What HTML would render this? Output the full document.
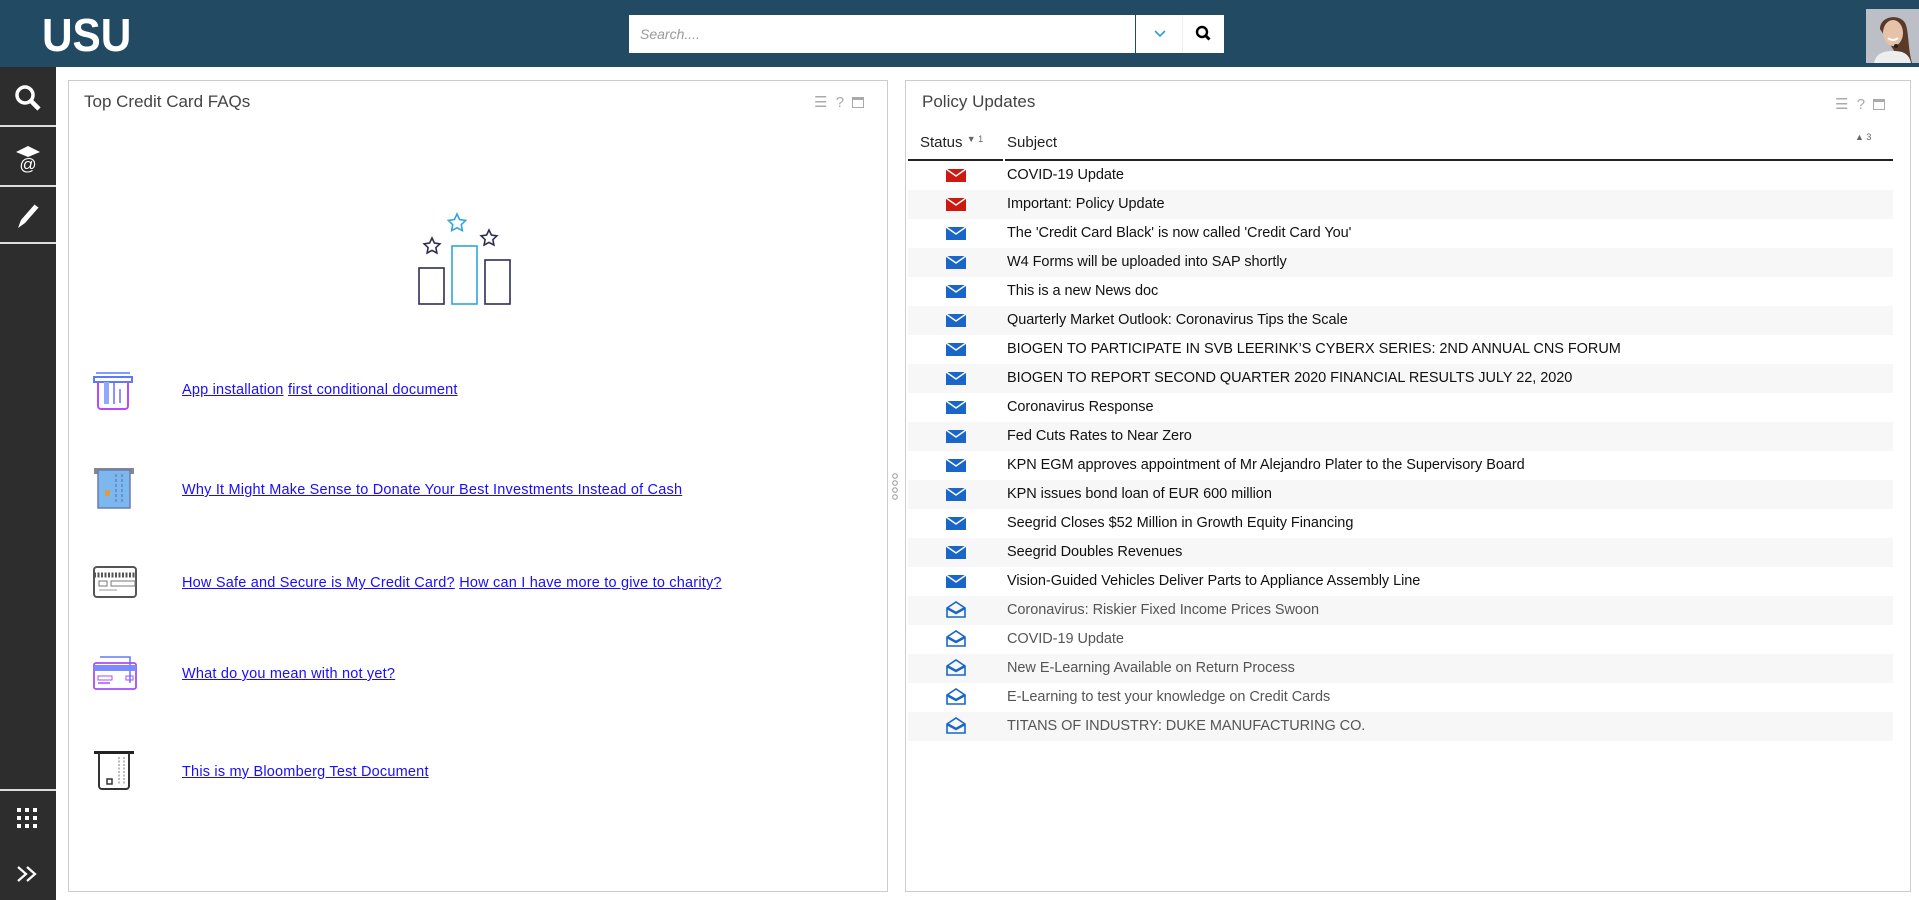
<!DOCTYPE html>
<html><head><meta charset="utf-8"><style>
*{box-sizing:border-box;margin:0;padding:0}
body{width:1919px;height:900px;overflow:hidden;background:#fff;font-family:"Liberation Sans",sans-serif;position:relative}
.hdr{position:absolute;left:0;top:0;width:1919px;height:67px;background:#234a63}
.logo{position:absolute;left:42px;top:8px;color:#fff;font-weight:bold;font-size:46px;letter-spacing:0px;transform:scaleX(0.92);transform-origin:left}
.search{position:absolute;left:629px;top:15px;width:507px;height:38px;background:#fff;border-right:1px solid #234a63}
.search span{position:absolute;left:11px;top:11px;font-size:14px;font-style:italic;color:#999}
.dd{position:absolute;left:1136px;top:15px;width:47px;height:38px;background:#fff;border-right:1px solid #eee}
.sb{position:absolute;left:1183px;top:15px;width:41px;height:38px;background:#fff}
.av{position:absolute;left:1866px;top:9px;width:53px;height:54px}
.side{position:absolute;left:0;top:67px;width:56px;height:833px;background:#2d2d2d}
.ln{position:absolute;left:0;width:56px;height:2px;background:#ddd}
.panel{position:absolute;border:1px solid #ccc;background:#fff}
.ttl{position:absolute;font-size:17px;color:#444}
.tools{position:absolute;font-size:15px;color:#aaa}
a{color:#1a0dff;text-decoration:underline;font-size:14.5px;letter-spacing:.2px}
.lk{position:absolute;left:182px}
.row{position:absolute;left:908px;width:985px;height:29px;font-size:14.5px;letter-spacing:-.05px;color:#111;line-height:29px}
.row.s{background:#f7f7f7}
.row .t{position:absolute;left:99px;top:0}
.row.r .t{color:#555}
.row svg{position:absolute;left:38px;top:8px}
</style></head><body>
<div class="hdr">
<div class="logo">USU</div>
<div class="search"><span>Search....</span></div>
<div class="dd"><svg width="47" height="38"><path d="M19 16l5 5 5-5" stroke="#2a9fd8" stroke-width="1.6" fill="none"/></svg></div>
<div class="sb"><svg width="41" height="38"><circle cx="19" cy="17" r="5" stroke="#000" stroke-width="2.4" fill="none"/><path d="M22.5 20.5l4 4" stroke="#000" stroke-width="3"/></svg></div>
<svg class="av" width="53" height="54"><rect width="53" height="54" fill="#bcbfc6"/><path d="M14 20c0-14 22-16 26-4 3 10 2 24 6 38H36z" fill="#5a3a28"/><ellipse cx="27" cy="24" rx="10" ry="13" fill="#e6c2a8"/><path d="M8 54c2-10 10-12 19-12s16 2 18 12z" fill="#eee"/><path d="M22 29q5 4 10 0" stroke="#fff" stroke-width="2" fill="none"/><circle cx="30" cy="37" r="2" fill="#222"/></svg>
</div>
<div class="side">
<svg style="position:absolute;left:13px;top:16px" width="30" height="30"><circle cx="12" cy="12" r="8" stroke="#fff" stroke-width="3.5" fill="none"/><path d="M18 18l8 8" stroke="#fff" stroke-width="4.5"/></svg>
<div class="ln" style="top:58px"></div>
<svg style="position:absolute;left:14px;top:77px" width="28" height="30"><path d="M2 8l12-6 12 6-12 5z" fill="#fff"/><text x="14" y="26" font-size="17" fill="#fff" text-anchor="middle" font-family="Liberation Sans">@</text></svg>
<div class="ln" style="top:118px"></div>
<svg style="position:absolute;left:14px;top:134px" width="28" height="30"><path d="M4 27l3-8 14-16 4 3-14 16z" fill="#fff"/><path d="M21 3l4 3" stroke="#2d2d2d" stroke-width="1.5"/></svg>
<div class="ln" style="top:175px"></div>
<div class="ln" style="top:722px"></div>
<svg style="position:absolute;left:17px;top:741px" width="22" height="22" fill="#fff"><rect x="0" y="0" width="4" height="4"/><rect x="8" y="0" width="4" height="4"/><rect x="16" y="0" width="4" height="4"/><rect x="0" y="8" width="4" height="4"/><rect x="8" y="8" width="4" height="4"/><rect x="16" y="8" width="4" height="4"/><rect x="0" y="16" width="4" height="4"/><rect x="8" y="16" width="4" height="4"/><rect x="16" y="16" width="4" height="4"/></svg>
<svg style="position:absolute;left:15px;top:797px" width="26" height="20"><path d="M3 3l8 7-8 7M12 3l8 7-8 7" stroke="#fff" stroke-width="2.2" fill="none"/></svg>
</div>

<div class="panel" style="left:68px;top:80px;width:820px;height:812px"></div>
<div class="ttl" style="left:84px;top:92px">Top Credit Card FAQs</div>
<div class="tools" style="left:814px;top:93px">☰ &nbsp;? &nbsp;<span style="display:inline-block;width:12px;height:11px;border:1.5px solid #aaa;border-top-width:3px;vertical-align:-1px"></span></div>
<svg style="position:absolute;left:409px;top:210px" width="110" height="100">
<path d="M23 28l2.4 5 5.5.8-4 3.8 1 5.4-4.9-2.6-4.9 2.6 1-5.4-4-3.8 5.5-.8z" stroke="#2b2f55" stroke-width="1.6" fill="none"/>
<path d="M48 4l2.6 5.5 6 .9-4.3 4.2 1 6-5.3-2.8-5.3 2.8 1-6-4.3-4.2 6-.9z" stroke="#2fa6d8" stroke-width="1.6" fill="none"/>
<path d="M80 20l2.4 5 5.5.8-4 3.8 1 5.4-4.9-2.6-4.9 2.6 1-5.4-4-3.8 5.5-.8z" stroke="#2b2f55" stroke-width="1.6" fill="none"/>
<rect x="10" y="58" width="25" height="36" stroke="#2b2f55" stroke-width="1.6" fill="none"/>
<rect x="43" y="36" width="25" height="58" stroke="#2fa6d8" stroke-width="1.6" fill="none"/>
<rect x="76" y="50" width="25" height="44" stroke="#2b2f55" stroke-width="1.6" fill="none"/>
</svg>
<svg style="position:absolute;left:92px;top:369px" width="44" height="42"><path d="M2 8h38v5H2z" stroke="#5b7bff" stroke-width="2" fill="none"/><path d="M4 4h34" stroke="#5b7bff" stroke-width="1.5"/><path d="M6 13v24a3 3 0 003 3h24a3 3 0 003-3V13" stroke="#b54bff" stroke-width="2" fill="none"/><rect x="12" y="13" width="5" height="22" fill="#8fa9ff"/><path d="M22 13v22M28 20v14" stroke="#6b6bff" stroke-width="1.5"/></svg>
<svg style="position:absolute;left:92px;top:466px" width="44" height="44"><path d="M2 2h40v6H2z" fill="#888"/><rect x="6" y="4" width="32" height="38" fill="#7cb8ee" stroke="#6a7bb0" stroke-width="1.5"/><rect x="13" y="24" width="5" height="6" fill="#d4a050"/><path d="M24 8v30M30 8v30" stroke="#5a6bb0" stroke-dasharray="3 2"/></svg>
<svg style="position:absolute;left:92px;top:565px" width="46" height="34"><rect x="2" y="2" width="42" height="30" rx="3" stroke="#555" stroke-width="2" fill="none"/><path d="M2 10h42" stroke="#555" stroke-width="5" stroke-dasharray="2 1.5"/><rect x="7" y="16" width="8" height="5" stroke="#777" fill="none"/><rect x="19" y="16" width="24" height="5" stroke="#777" fill="none"/><path d="M7 25h18" stroke="#999"/></svg>
<svg style="position:absolute;left:92px;top:655px" width="48" height="36"><path d="M8 2h30v26" stroke="#5b7bff" stroke-width="1.5" fill="none"/><rect x="2" y="8" width="42" height="26" rx="2" stroke="#a84bff" stroke-width="1.8" fill="none"/><rect x="2" y="10" width="42" height="6" fill="#7b8bff"/><rect x="6" y="21" width="14" height="4" stroke="#a84bff" fill="none"/><rect x="34" y="21" width="7" height="4" stroke="#a84bff" fill="none"/><path d="M6 28h12" stroke="#b54bff" stroke-width="1.5"/></svg>
<svg style="position:absolute;left:92px;top:749px" width="46" height="42"><path d="M2 2h40v3H2z" fill="#222"/><path d="M7 4v33a3 3 0 003 3h24a3 3 0 003-3V4" stroke="#333" stroke-width="2" fill="none"/><rect x="15" y="30" width="5" height="5" stroke="#333" stroke-width="1.5" fill="none"/><path d="M27 8v28M32 8v28" stroke="#777" stroke-dasharray="2 1.5"/></svg>
<div class="lk" style="top:381px"><a>App installation</a> <a>first conditional document</a></div>
<div class="lk" style="top:481px"><a>Why It Might Make Sense to Donate Your Best Investments Instead of Cash</a></div>
<div class="lk" style="top:574px"><a>How Safe and Secure is My Credit Card?</a> <a>How can I have more to give to charity?</a></div>
<div class="lk" style="top:665px"><a>What do you mean with not yet?</a></div>
<div class="lk" style="top:763px"><a>This is my Bloomberg Test Document</a></div>

<svg style="position:absolute;left:891px;top:472px" width="8" height="30"><circle cx="4" cy="4" r="2.3" stroke="#999" fill="none"/><circle cx="4" cy="11" r="2.3" stroke="#999" fill="none"/><circle cx="4" cy="18" r="2.3" stroke="#999" fill="none"/><circle cx="4" cy="25" r="2.3" stroke="#999" fill="none"/></svg>

<div class="panel" style="left:905px;top:80px;width:1006px;height:812px"></div>
<div class="ttl" style="left:922px;top:92px">Policy Updates</div>
<div class="tools" style="left:1835px;top:95px">☰ &nbsp;? &nbsp;<span style="display:inline-block;width:12px;height:11px;border:1.5px solid #aaa;border-top-width:3px;vertical-align:-1px"></span></div>
<div style="position:absolute;left:920px;top:134px;font-size:15px;color:#222">Status <span style="font-size:9px;color:#666;vertical-align:5px">▼ 1</span></div>
<div style="position:absolute;left:1007px;top:134px;font-size:15px;color:#222">Subject</div>
<div style="position:absolute;left:1855px;top:132px;font-size:9px;color:#666">▲ 3</div>
<div style="position:absolute;left:908px;top:159px;width:985px;height:2px;background:#222"></div>
<div style="position:absolute;left:1003px;top:159px;width:2px;height:2px;background:#fff"></div>

<div class="row" style="top:161px"><svg width="20" height="13"><rect width="20" height="13" fill="#cc1a10"/><path d="M0 0l10 7 10-7" stroke="#fff" stroke-width="1.5" fill="none"/></svg><span class="t">COVID-19 Update</span></div>
<div class="row s" style="top:190px"><svg width="20" height="13"><rect width="20" height="13" fill="#cc1a10"/><path d="M0 0l10 7 10-7" stroke="#fff" stroke-width="1.5" fill="none"/></svg><span class="t">Important: Policy Update</span></div>
<div class="row" style="top:219px"><svg width="20" height="13"><rect width="20" height="13" fill="#1a66c8"/><path d="M0 0l10 7 10-7" stroke="#fff" stroke-width="1.5" fill="none"/></svg><span class="t">The 'Credit Card Black' is now called 'Credit Card You'</span></div>
<div class="row s" style="top:248px"><svg width="20" height="13"><rect width="20" height="13" fill="#1a66c8"/><path d="M0 0l10 7 10-7" stroke="#fff" stroke-width="1.5" fill="none"/></svg><span class="t">W4 Forms will be uploaded into SAP shortly</span></div>
<div class="row" style="top:277px"><svg width="20" height="13"><rect width="20" height="13" fill="#1a66c8"/><path d="M0 0l10 7 10-7" stroke="#fff" stroke-width="1.5" fill="none"/></svg><span class="t">This is a new News doc</span></div>
<div class="row s" style="top:306px"><svg width="20" height="13"><rect width="20" height="13" fill="#1a66c8"/><path d="M0 0l10 7 10-7" stroke="#fff" stroke-width="1.5" fill="none"/></svg><span class="t">Quarterly Market Outlook: Coronavirus Tips the Scale</span></div>
<div class="row" style="top:335px"><svg width="20" height="13"><rect width="20" height="13" fill="#1a66c8"/><path d="M0 0l10 7 10-7" stroke="#fff" stroke-width="1.5" fill="none"/></svg><span class="t">BIOGEN TO PARTICIPATE IN SVB LEERINK’S CYBERX SERIES: 2ND ANNUAL CNS FORUM</span></div>
<div class="row s" style="top:364px"><svg width="20" height="13"><rect width="20" height="13" fill="#1a66c8"/><path d="M0 0l10 7 10-7" stroke="#fff" stroke-width="1.5" fill="none"/></svg><span class="t">BIOGEN TO REPORT SECOND QUARTER 2020 FINANCIAL RESULTS JULY 22, 2020</span></div>
<div class="row" style="top:393px"><svg width="20" height="13"><rect width="20" height="13" fill="#1a66c8"/><path d="M0 0l10 7 10-7" stroke="#fff" stroke-width="1.5" fill="none"/></svg><span class="t">Coronavirus Response</span></div>
<div class="row s" style="top:422px"><svg width="20" height="13"><rect width="20" height="13" fill="#1a66c8"/><path d="M0 0l10 7 10-7" stroke="#fff" stroke-width="1.5" fill="none"/></svg><span class="t">Fed Cuts Rates to Near Zero</span></div>
<div class="row" style="top:451px"><svg width="20" height="13"><rect width="20" height="13" fill="#1a66c8"/><path d="M0 0l10 7 10-7" stroke="#fff" stroke-width="1.5" fill="none"/></svg><span class="t">KPN EGM approves appointment of Mr Alejandro Plater to the Supervisory Board</span></div>
<div class="row s" style="top:480px"><svg width="20" height="13"><rect width="20" height="13" fill="#1a66c8"/><path d="M0 0l10 7 10-7" stroke="#fff" stroke-width="1.5" fill="none"/></svg><span class="t">KPN issues bond loan of EUR 600 million</span></div>
<div class="row" style="top:509px"><svg width="20" height="13"><rect width="20" height="13" fill="#1a66c8"/><path d="M0 0l10 7 10-7" stroke="#fff" stroke-width="1.5" fill="none"/></svg><span class="t">Seegrid Closes $52 Million in Growth Equity Financing</span></div>
<div class="row s" style="top:538px"><svg width="20" height="13"><rect width="20" height="13" fill="#1a66c8"/><path d="M0 0l10 7 10-7" stroke="#fff" stroke-width="1.5" fill="none"/></svg><span class="t">Seegrid Doubles Revenues</span></div>
<div class="row" style="top:567px"><svg width="20" height="13"><rect width="20" height="13" fill="#1a66c8"/><path d="M0 0l10 7 10-7" stroke="#fff" stroke-width="1.5" fill="none"/></svg><span class="t">Vision-Guided Vehicles Deliver Parts to Appliance Assembly Line</span></div>
<div class="row s r" style="top:596px"><svg width="20" height="17" style="top:5px"><path d="M1 7l9-6 9 6v9H1z" stroke="#1a66c8" stroke-width="1.6" fill="none"/><path d="M1 7l9 5 9-5" stroke="#1a66c8" stroke-width="2.5" fill="none"/></svg><span class="t">Coronavirus: Riskier Fixed Income Prices Swoon</span></div>
<div class="row r" style="top:625px"><svg width="20" height="17" style="top:5px"><path d="M1 7l9-6 9 6v9H1z" stroke="#1a66c8" stroke-width="1.6" fill="none"/><path d="M1 7l9 5 9-5" stroke="#1a66c8" stroke-width="2.5" fill="none"/></svg><span class="t">COVID-19 Update</span></div>
<div class="row s r" style="top:654px"><svg width="20" height="17" style="top:5px"><path d="M1 7l9-6 9 6v9H1z" stroke="#1a66c8" stroke-width="1.6" fill="none"/><path d="M1 7l9 5 9-5" stroke="#1a66c8" stroke-width="2.5" fill="none"/></svg><span class="t">New E-Learning Available on Return Process</span></div>
<div class="row r" style="top:683px"><svg width="20" height="17" style="top:5px"><path d="M1 7l9-6 9 6v9H1z" stroke="#1a66c8" stroke-width="1.6" fill="none"/><path d="M1 7l9 5 9-5" stroke="#1a66c8" stroke-width="2.5" fill="none"/></svg><span class="t">E-Learning to test your knowledge on Credit Cards</span></div>
<div class="row s r" style="top:712px"><svg width="20" height="17" style="top:5px"><path d="M1 7l9-6 9 6v9H1z" stroke="#1a66c8" stroke-width="1.6" fill="none"/><path d="M1 7l9 5 9-5" stroke="#1a66c8" stroke-width="2.5" fill="none"/></svg><span class="t">TITANS OF INDUSTRY: DUKE MANUFACTURING CO.</span></div>
</body></html>
